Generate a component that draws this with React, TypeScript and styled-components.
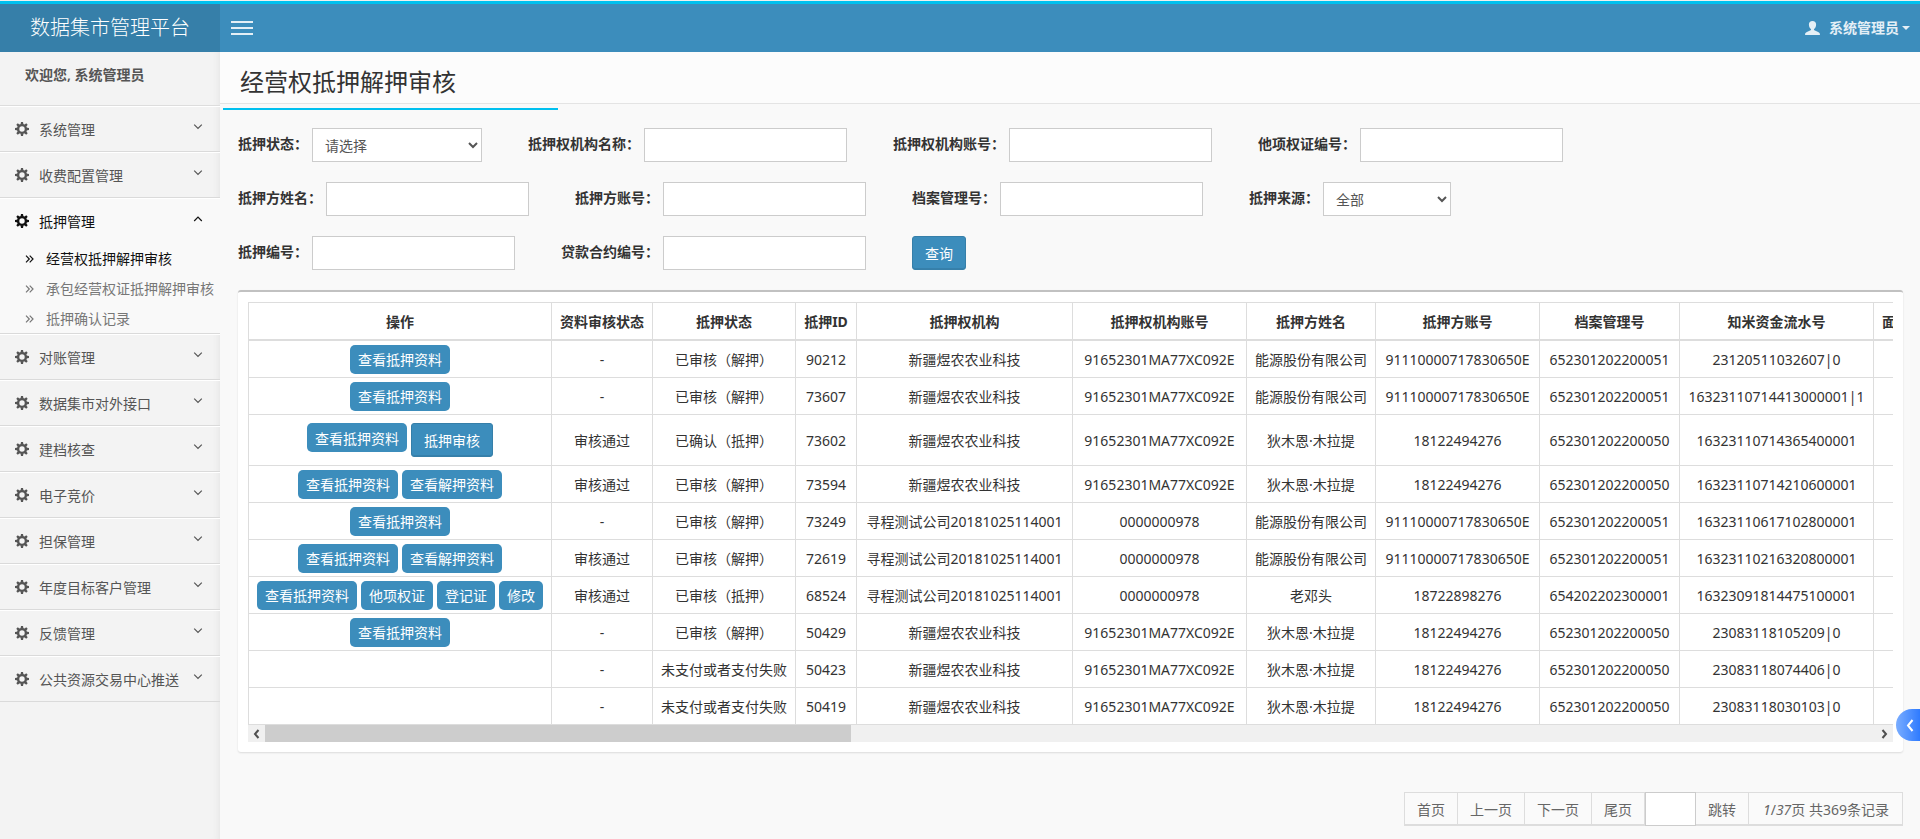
import React, { useState } from "react";
import styled, { createGlobalStyle, css } from "styled-components";

const Global = createGlobalStyle`
  *, *::before, *::after { box-sizing: border-box; }
  html, body { margin: 0; }
  body {
    background: #f9f9f9;
    color: #333;
    font: 14px/20px "Noto Sans", "Noto Sans CJK SC", sans-serif;
  }
  button, input, select { font: inherit; color: inherit; margin: 0; }
  a { color: inherit; text-decoration: none; }
  ul { list-style: none; margin: 0; padding: 0; }
`;

const Page = styled.div`
  display: flex;
  flex-direction: column;
  min-height: 100vh;
  border-top: 1px solid #f1efee;
`;

const TopBar = styled.header`
  display: flex;
  height: 51px;
  border-top: 3px solid #00c0ef;
  background: #3c8dbc;
  color: #e4eff6;
`;

const Brand = styled.a`
  width: 220px;
  background: #367fa9;
  color: #fff;
  font-family: KaiTi, STKaiti, "Noto Sans CJK SC", sans-serif;
  font-size: 20px;
  line-height: 46px;
  font-weight: 300;
  text-align: center;
`;

const MenuToggle = styled.button`
  display: flex;
  flex-direction: column;
  justify-content: center;
  gap: 4px;
  width: 44px;
  padding: 0 11px;
  border: 0;
  background: none;
  cursor: pointer;
`;

const Bar = styled.span`
  height: 2px;
  background: #e4eff6;
`;

const UserMenu = styled.button`
  display: flex;
  align-items: center;
  margin-left: auto;
  padding: 0 10px 0 0;
  border: 0;
  background: none;
  cursor: pointer;
  font-weight: 600;
`;

const UserName = styled.span`
  margin: 0 3px 0 9px;
`;

const Caret = styled.span`
  border: 4px solid transparent;
  border-top-color: currentColor;
  border-bottom: 0;
`;

const Body = styled.div`
  display: flex;
  flex: 1;
`;

const Sidebar = styled.nav`
  flex: none;
  width: 220px;
  background: #f3f3f3;
  box-shadow: inset -7px 0 9px -7px rgba(0, 0, 0, 0.08);
  color: #555;
`;

const Welcome = styled.p`
  height: 54px;
  margin: 0;
  padding: 13px 25px;
  border-bottom: 1px solid #ddd;
  font-weight: 600;
`;

const Group = styled.li<{ $open?: boolean }>`
  border-top: 1px solid #fff;
  border-bottom: 1px solid #dadada;
  ${(p) =>
    p.$open &&
    css`
      background: #f9f9f9;
      color: #111;
    `}
`;

const GroupLink = styled.a`
  display: flex;
  align-items: center;
  height: 44px;
  padding: 0 15px;
`;

const GroupName = styled.span`
  flex: 1;
  margin-left: 10px;
  padding-top: 2px;
`;

const SubLink = styled.a<{ $current?: boolean }>`
  display: flex;
  align-items: center;
  gap: 12px;
  height: 30px;
  padding: 2px 0 0 25px;
  white-space: nowrap;
  color: ${(p) => (p.$current ? "#111" : "#777")};
`;

const Main = styled.main`
  flex: 1;
  min-width: 0;
`;

const TitleBar = styled.div`
  height: 52px;
  padding-left: 20px;
  background: #fcfcfc;
  border-bottom: 1px solid #e4e4e4;
`;

const Title = styled.h1`
  margin: 0;
  font-size: 24px;
  font-weight: 400;
  line-height: 60px;
`;

const Accent = styled.div`
  width: 335px;
  height: 2px;
  margin: 4px 0 0 3px;
  background: #00c0ef;
`;

const Filters = styled.form`
  display: flex;
  flex-direction: column;
  gap: 20px;
  padding: 18px 18px 20px;
`;

const FilterRow = styled.div`
  display: flex;
  align-items: center;
  gap: 46px;
`;

const Field = styled.div`
  display: flex;
  align-items: center;
  gap: 4px;
`;

const Label = styled.label`
  padding-bottom: 2px;
  font-weight: 700;
  white-space: nowrap;
`;

const control = css`
  height: 34px;
  border: 1px solid #ccc;
  border-radius: 0;
  background: #fff;
  color: #555;
`;

const TextBox = styled.input`
  ${control}
  width: 203px;
  padding: 6px 12px;
`;

const Select = styled.select<{ $wide?: boolean }>`
  ${control}
  width: ${(p) => (p.$wide ? 170 : 128)}px;
  padding: 6px 0 6px 8px;
`;

const Primary = styled.button`
  height: 34px;
  padding: 2px 12px 0;
  border: 1px solid #367fa9;
  border-radius: 3px;
  background: #3c8dbc;
  color: #fff;
  box-shadow: inset 0 -1px 0 rgba(0, 0, 0, 0.09);
  cursor: pointer;
`;

const Small = styled.button`
  height: 29px;
  padding: 2px 8px 0;
  border: 0;
  border-radius: 5px;
  background: #3c8dbc;
  color: #fff;
  cursor: pointer;
`;

const Panel = styled.section`
  margin: 0 17px 0 18px;
  padding: 10px;
  border-top: 2px solid #c1c1c1;
  border-radius: 3px;
  background: #fff;
  box-shadow: 0 1px 2px rgba(0, 0, 0, 0.12);
`;

const TableScroll = styled.div`
  overflow-x: auto;
  scrollbar-width: none;
`;

const Table = styled.table`
  width: 4514px;
  table-layout: fixed;
  border-collapse: separate;
  border-spacing: 0;
  border: 1px solid #ddd;
  border-width: 1px 0 0 1px;
  text-align: center;
  white-space: nowrap;
`;

const Col = styled.col<{ $w?: number }>`
  width: ${(p) => (p.$w ? `${p.$w}px` : "auto")};
`;

const Th = styled.th`
  height: 38px;
  padding: 2px 0 0;
  border-right: 1px solid #ddd;
  border-bottom: 2px solid #ddd;
  font-weight: 700;
`;

const LeadTh = styled(Th)`
  padding-left: 8px;
  text-align: left;
`;

const Td = styled.td<{ $tall?: boolean }>`
  height: ${(p) => (p.$tall ? 51 : 37)}px;
  padding: 2px 0 0;
  border-right: 1px solid #ddd;
  border-bottom: 1px solid #ddd;
`;

const ActionTd = styled(Td)`
  padding: 0;
`;

const Actions = styled.div`
  display: flex;
  justify-content: center;
  align-items: flex-start;
  gap: 4px;
`;

const ScrollBar = styled.div`
  display: flex;
  height: 17px;
  background: #f0f0f0;
`;

const ScrollButton = styled.button`
  display: flex;
  align-items: center;
  justify-content: center;
  width: 17px;
  padding: 0;
  border: 0;
  background: none;
  color: #505050;
`;

const Track = styled.div`
  flex: 1;
`;

const Thumb = styled.div`
  width: 36.4%;
  height: 17px;
  background: #cdcdcd;
`;

const Pager = styled.div`
  display: flex;
  justify-content: flex-end;
  margin: 40px 17px 13px;
  color: #666;
`;

const pagerCell = css`
  height: 34px;
  padding: 4px 12px 2px;
  border: 1px solid #ddd;
  border-left-width: 0;
  border-bottom-width: 2px;
  background: #fafafa;
  line-height: 25px;
`;

const PageButton = styled.button<{ $first?: boolean }>`
  ${pagerCell}
  cursor: pointer;
  ${(p) => p.$first && "border-left-width: 1px;"}
`;

const PageInput = styled.input`
  ${control}
  width: 51px;
  padding: 6px;
`;

const PageInfo = styled.span`
  ${pagerCell}
  padding-left: 14px;
  padding-right: 13px;
`;

const SideTab = styled.button`
  position: fixed;
  right: 0;
  top: 709px;
  display: flex;
  align-items: center;
  justify-content: flex-end;
  width: 24px;
  height: 32px;
  padding: 0 6px 0 0;
  border: 0;
  border-radius: 16px 0 0 16px;
  background: linear-gradient(90deg, #7aadff, #2f7bff);
  color: #fff;
  cursor: pointer;
`;

const CogIcon = () => (
  <svg width="14" height="14" viewBox="0 0 14 14" fill="none" aria-hidden="true">
    <circle cx="7" cy="7" r="3.9" stroke="currentColor" strokeWidth="2.4" />
    {[0, 45, 90, 135, 180, 225, 270, 315].map((a) => (
      <path key={a} d="M5.500 2.8 6 0h2l.5 2.8z" fill="currentColor" transform={`rotate(${a} 7 7)`} />
    ))}
  </svg>
);

const Angle = ({ d, w, h, stroke = 1.2 }: { d: string; w: number; h: number; stroke?: number }) => (
  <svg width={w} height={h} viewBox={`0 0 ${w} ${h}`} fill="none" stroke="currentColor" strokeWidth={stroke} aria-hidden="true">
    <path d={d} />
  </svg>
);

const UserIcon = () => (
  <svg width="15" height="14" viewBox="0 0 15 14" fill="currentColor" aria-hidden="true">
    <path d="M7.500 0C5.200 0 3.900 1.400 3.900 3.500c0 2 .8 3.700 2 4.600.3.300.2.900-.3 1.100L1.900 10.900C.7 11.400.1 12.200.1 13v1h14.800v-1c0-.8-.6-1.600-1.800-2.100L9.400 9.200c-.5-.2-.6-.8-.3-1.100 1.200-.9 2-2.600 2-4.600C11.100 1.400 9.800 0 7.500 0z" />
  </svg>
);

const groups = [
  "系统管理", "收费配置管理", "抵押管理", "对账管理", "数据集市对外接口", "建档核查",
  "电子竞价", "担保管理", "年度目标客户管理", "反馈管理", "公共资源交易中心推送",
];
const subItems = ["经营权抵押解押审核", "承包经营权证抵押解押审核", "抵押确认记录"];

type FieldSpec = { id: string; label: string; options?: string[]; wide?: boolean };
const filterRows: FieldSpec[][] = [
  [
    { id: "status", label: "抵押状态：", options: ["请选择"], wide: true },
    { id: "orgName", label: "抵押权机构名称：" },
    { id: "orgAccount", label: "抵押权机构账号：" },
    { id: "certNo", label: "他项权证编号：" },
  ],
  [
    { id: "pledger", label: "抵押方姓名：" },
    { id: "pledgerAccount", label: "抵押方账号：" },
    { id: "archiveNo", label: "档案管理号：" },
    { id: "source", label: "抵押来源：", options: ["全部"] },
  ],
  [
    { id: "pledgeNo", label: "抵押编号：" },
    { id: "loanNo", label: "贷款合约编号：" },
  ],
];

const widths = [303, 101, 143, 61, 216, 174, 129, 164, 140, 194];
const headings = [
  "操作", "资料审核状态", "抵押状态", "抵押ID", "抵押权机构", "抵押权机构账号",
  "抵押方姓名", "抵押方账号", "档案管理号", "知米资金流水号",
];

const view = "查看抵押资料";
const viewRelease = "查看解押资料";
const audit = "抵押审核";
const farm = ["新疆煜农农业科技", "91652301MA77XC092E"];
const test = ["寻程测试公司20181025114001", "0000000978"];
const energy = ["能源股份有限公司", "91110000717830650E", "652301202200051"];
const person = ["狄木恩·木拉提", "18122494276", "652301202200050"];
const released = "已审核（解押）";
const unpaid = "未支付或者支付失败";

const rows: { actions: string[]; cells: string[] }[] = [
  { actions: [view], cells: ["-", released, "90212", ...farm, ...energy, "23120511032607|0"] },
  { actions: [view], cells: ["-", released, "73607", ...farm, ...energy, "16323110714413000001|1"] },
  { actions: [view, audit], cells: ["审核通过", "已确认（抵押）", "73602", ...farm, ...person, "16323110714365400001"] },
  { actions: [view, viewRelease], cells: ["审核通过", released, "73594", ...farm, ...person, "16323110714210600001"] },
  { actions: [view], cells: ["-", released, "73249", ...test, ...energy, "16323110617102800001"] },
  { actions: [view, viewRelease], cells: ["审核通过", released, "72619", ...test, ...energy, "16323110216320800001"] },
  {
    actions: [view, "他项权证", "登记证", "修改"],
    cells: ["审核通过", "已审核（抵押）", "68524", ...test, "老邓头", "18722898276", "654202202300001", "16323091814475100001"],
  },
  { actions: [view], cells: ["-", released, "50429", ...farm, ...person, "23083118105209|0"] },
  { actions: [], cells: ["-", unpaid, "50423", ...farm, ...person, "23083118074406|0"] },
  { actions: [], cells: ["-", unpaid, "50419", ...farm, ...person, "23083118030103|0"] },
];

export default function App() {
  const [open, setOpen] = useState("抵押管理");

  return (
    <Page>
      <Global />
      <TopBar>
        <Brand href="#">数据集市管理平台</Brand>
        <MenuToggle type="button" aria-label="切换菜单">
          <Bar />
          <Bar />
          <Bar />
        </MenuToggle>
        <UserMenu type="button">
          <UserIcon />
          <UserName>系统管理员</UserName>
          <Caret />
        </UserMenu>
      </TopBar>
      <Body>
        <Sidebar>
          <Welcome>欢迎您, 系统管理员</Welcome>
          <ul>
            {groups.map((name) => {
              const isOpen = name === open;
              return (
                <Group key={name} $open={isOpen}>
                  <GroupLink href="#" onClick={() => setOpen(name)}>
                    <CogIcon />
                    <GroupName>{name}</GroupName>
                    <Angle w={14} h={14} d={isOpen ? "M3.200 7 7 3.200 10.800 7" : "M3.200 2.700 7 6.500 10.800 2.700"} />
                  </GroupLink>
                  {isOpen && name === "抵押管理" && (
                    <ul>
                      {subItems.map((item, i) => (
                        <li key={item}>
                          <SubLink href="#" $current={i === 0}>
                            <Angle w={9} h={8} d="M1 .7 4.300 4 1 7.300M4.700.7 8 4 4.700 7.300" />
                            {item}
                          </SubLink>
                        </li>
                      ))}
                    </ul>
                  )}
                </Group>
              );
            })}
          </ul>
        </Sidebar>
        <Main>
          <TitleBar>
            <Title>经营权抵押解押审核</Title>
          </TitleBar>
          <Accent />
          <Filters onSubmit={(e) => e.preventDefault()}>
            {filterRows.map((fields, r) => (
              <FilterRow key={r}>
                {fields.map((f) => (
                  <Field key={f.id}>
                    <Label htmlFor={f.id}>{f.label}</Label>
                    {f.options ? (
                      <Select id={f.id} $wide={f.wide}>
                        {f.options.map((o) => (
                          <option key={o}>{o}</option>
                        ))}
                      </Select>
                    ) : (
                      <TextBox id={f.id} type="text" />
                    )}
                  </Field>
                ))}
                {r === filterRows.length - 1 && <Primary type="submit">查询</Primary>}
              </FilterRow>
            ))}
          </Filters>
          <Panel>
            <TableScroll>
              <Table>
                <colgroup>
                  {widths.map((w, i) => (
                    <Col key={i} $w={w} />
                  ))}
                  <Col />
                </colgroup>
                <thead>
                  <tr>
                    {headings.map((h) => (
                      <Th key={h}>{h}</Th>
                    ))}
                    <LeadTh>面积</LeadTh>
                  </tr>
                </thead>
                <tbody>
                  {rows.map(({ actions, cells }) => (
                    <tr key={cells[2]}>
                      <ActionTd $tall={actions.includes(audit)}>
                        <Actions>
                          {actions.map((a) =>
                            a === audit ? (
                              <Primary key={a} type="button">{a}</Primary>
                            ) : (
                              <Small key={a} type="button">{a}</Small>
                            )
                          )}
                        </Actions>
                      </ActionTd>
                      {cells.map((c, i) => (
                        <Td key={i}>{c}</Td>
                      ))}
                      <Td />
                    </tr>
                  ))}
                </tbody>
              </Table>
            </TableScroll>
            <ScrollBar>
              <ScrollButton type="button" aria-label="向左滚动">
                <Angle w={7} h={10} stroke={2} d="M5.500 1 2 5l3.500 4" />
              </ScrollButton>
              <Track>
                <Thumb />
              </Track>
              <ScrollButton type="button" aria-label="向右滚动">
                <Angle w={7} h={10} stroke={2} d="M1.500 1 5 5 1.500 9" />
              </ScrollButton>
            </ScrollBar>
          </Panel>
          <Pager>
            <PageButton type="button" $first>首页</PageButton>
            <PageButton type="button">上一页</PageButton>
            <PageButton type="button">下一页</PageButton>
            <PageButton type="button">尾页</PageButton>
            <PageInput type="text" aria-label="页码" />
            <PageButton type="button">跳转</PageButton>
            <PageInfo>
              <em>1</em>/<em>37</em>页 共369条记录
            </PageInfo>
          </Pager>
        </Main>
      </Body>
      <SideTab type="button" aria-label="展开">
        <Angle w={8} h={13} stroke={2} d="M6.500 1 2 6.500l4.500 5.500" />
      </SideTab>
    </Page>
  );
}
